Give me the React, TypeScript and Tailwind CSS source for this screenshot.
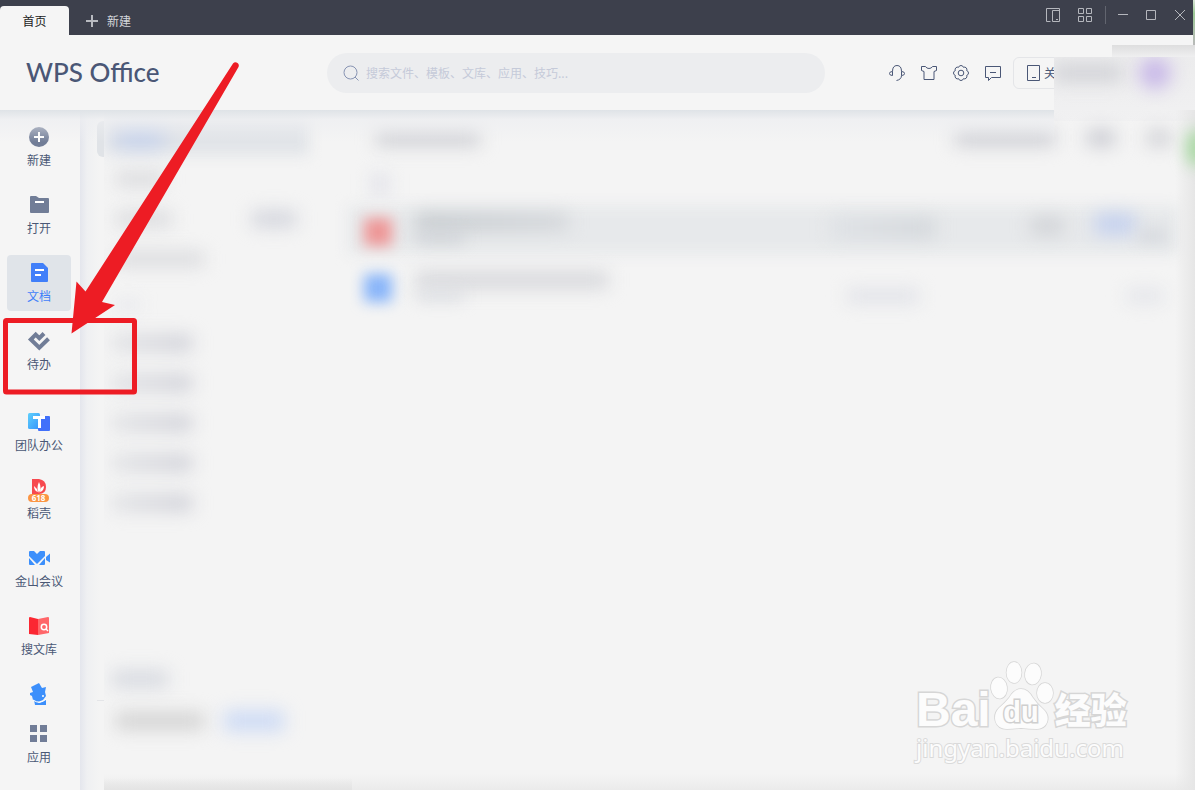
import type { ReactNode } from "react";

type NavItem = { label: string; icon: ReactNode; active?: boolean };

const mainNav: NavItem[] = [
  {
    label: "新建",
    icon: (
      <>
        <circle cx="12" cy="12" r="10" fill="#717d97" />
        <path d="M12 7v10M7 12h10" stroke="#fff" strokeWidth="2" />
      </>
    ),
  },
  {
    label: "打开",
    icon: (
      <>
        <path d="M3 4q0-1 1-1h5l3 2h9q1 0 1 1v13q0 1-1 1H4q-1 0-1-1z" fill="#717d97" />
        <path d="M8 9h9" stroke="#fff" strokeWidth="2" />
      </>
    ),
  },
  {
    label: "文档",
    active: true,
    icon: (
      <>
        <path d="M4 3q0-1 1-1h11l5 5v13q0 1-1 1H5q-1 0-1-1z" fill="#417ff9" />
        <path d="M8 9h9M8 14h6" stroke="#fff" strokeWidth="2" />
      </>
    ),
  },
  {
    label: "待办",
    icon: (
      <path
        d="M17 4.500l-4.700 4.700L8.700 5.600 3.800 10.500l8.500 8.300 9.200-9"
        fill="none"
        stroke="#717d97"
        strokeWidth="4"
      />
    ),
  },
];

const appNav: NavItem[] = [
  {
    label: "团队办公",
    icon: (
      <>
        <defs>
          <linearGradient id="team" x1="0" y1="0" x2="1" y2="1">
            <stop offset="0" stopColor="#5fd0fc" />
            <stop offset="1" stopColor="#3593fb" />
          </linearGradient>
        </defs>
        <rect x="1" y="3" width="12" height="16" rx="1.500" fill="url(#team)" />
        <path d="M11 6h11q1 0 1 1v13q0 1-1 1H12q-1 0-1-1z" fill="#4170fa" />
        <path d="M6 6h12v3h-4v9h-3v-9H6z" fill="#fff" />
      </>
    ),
  },
  {
    label: "稻壳",
    icon: (
      <>
        <path d="M5 1h7q7 1 7 8t-7 7H5z" fill="#f7494f" />
        <path
          d="M12 15q-3-5 0-11 3 6 0 11M11 14q-4-1-4-6 3 2 4 6M13 14q0-5 4-6 0 5-4 6"
          fill="#fff"
        />
        <rect x="1" y="16" width="21" height="8" rx="4" fill="#fb9543" />
        <text
          x="11.500"
          y="23"
          textAnchor="middle"
          className="fill-white font-['Noto_Sans',sans-serif] text-[8px] font-bold"
        >
          618
        </text>
      </>
    ),
  },
  {
    label: "金山会议",
    icon: (
      <>
        <path d="M2 6q0-1 1-1h4l3 3 3-3h4q1 0 1 1v4l-8 8-8-8z" fill="#3c8ffb" />
        <path d="M2 12l6 7H3q-1 0-1-1zM18 12l-6 7h5q1 0 1-1z" fill="#3c8ffb" />
        <path d="M19 11l4-3.500v9L19 14z" fill="#3c8ffb" />
      </>
    ),
  },
  {
    label: "搜文库",
    icon: (
      <>
        <path d="M2 4q0-1 1-1l8 2v16l-9-1z" fill="#fb2732" />
        <path d="M11 5l10-2q1 0 1 1v15l-11 2z" fill="#ff6669" />
        <circle cx="17" cy="13" r="2.700" fill="none" stroke="#fff" strokeWidth="1.500" />
        <path d="M19 15l2 2" stroke="#fff" strokeWidth="1.500" />
      </>
    ),
  },
];

const folderRows = ["w-12", "w-14", "w-22"];
const tagRows = ["w-20", "w-20", "w-20", "w-20", "w-20"];

function NavButton({ item }: { item: NavItem }) {
  return (
    <button
      type="button"
      className={`flex h-14 w-16 shrink-0 flex-col items-center rounded pt-1.5 ${
        item.active ? "bg-[#e0e4e9] text-[#417ff9]" : "text-[#4a5875]"
      }`}
    >
      <svg className="size-6" viewBox="0 0 24 24">
        {item.icon}
      </svg>
      <span className="mt-[3px] text-xs leading-4">{item.label}</span>
    </button>
  );
}

function Stroke({ children }: { children: ReactNode }) {
  return (
    <svg className="size-4" viewBox="0 0 16 16" fill="none" stroke="currentColor">
      {children}
    </svg>
  );
}

function TitleBar() {
  return (
    <div className="flex h-[35px] shrink-0 items-end bg-[#3d404c] text-xs text-[#d4d6da]">
      <button type="button" className="h-[29px] w-[69px] rounded-t bg-[#f5f5f5] text-[#222]">
        首页
      </button>
      <button type="button" className="ml-4 flex h-[29px] items-center gap-2">
        <svg className="size-3.5" viewBox="0 0 14 14" stroke="#b8bac0" strokeWidth="2">
          <path d="M7 1v12M1 7h12" />
        </svg>
        新建
      </button>
      <div className="mr-[7px] ml-auto flex h-[30px] items-center self-start text-[#b5b7bd]">
        <button type="button" aria-label="侧栏">
          <Stroke>
            <path d="M5.500 14.500h-4v-13h13v13h-7v-11h7M11 12.500h2" />
          </Stroke>
        </button>
        <button type="button" aria-label="网格" className="ml-4">
          <Stroke>
            <path d="M1.500 1.500h5v5h-5zM9.500 1.500h5v5h-5zM1.500 9.500h5v5h-5zM9.500 9.500h5v5h-5z" />
          </Stroke>
        </button>
        <span className="ml-3 h-[18px] w-px bg-[#62656f]" />
        <button type="button" aria-label="最小化" className="ml-[9px]">
          <Stroke>
            <path d="M3 7.500h10" />
          </Stroke>
        </button>
        <button type="button" aria-label="最大化" className="ml-3">
          <Stroke>
            <path d="M3.500 3.500h9v9h-9z" />
          </Stroke>
        </button>
        <button type="button" aria-label="关闭" className="ml-[13px]">
          <Stroke>
            <path d="M3 3l10 10M13 3L3 13" />
          </Stroke>
        </button>
      </div>
    </div>
  );
}

function Header() {
  return (
    <header className="relative flex h-[75px] shrink-0 items-center bg-[#f5f5f5] text-[#4a5776]">
      <h1 className="w-[327px] shrink-0 pl-[26px] font-['Lato',sans-serif] text-[26px] font-medium">
        WPS Office
      </h1>
      <label className="flex h-10 min-w-0 flex-1 items-center gap-[7px] rounded-full bg-[#ecedef] pl-4 text-[#8894b3]">
        <Stroke>
          <circle cx="7.500" cy="7.500" r="6.500" />
          <path d="M12 12l3.500 3.500" />
        </Stroke>
        <input
          type="search"
          aria-label="搜索"
          placeholder="搜索文件、模板、文库、应用、技巧..."
          className="min-w-0 flex-1 bg-transparent text-xs outline-none placeholder:text-[#c5cad9]"
        />
      </label>
      <div className="ml-16 flex items-center gap-4">
        <button type="button" aria-label="客服">
          <Stroke>
            <path d="M3.500 6.500v4q-3 0-3-2t3-2zM3.500 6.500q0-6 4.500-6t4.500 6v4q3 0 3-2t-3-2M12.500 10.500q0 4-5 5" />
          </Stroke>
        </button>
        <button type="button" aria-label="皮肤">
          <Stroke>
            <path d="M.5 1.500h4q1 2 3.500 2t3.500-2h4v4l-2.500 1v8H3v-8l-2.500-1z" />
          </Stroke>
        </button>
        <button type="button" aria-label="设置">
          <Stroke>
            <path d="M13.700 5.600a2.500 2.500 0 0 1 0 4.800 2.500 2.500 0 0 1-3.300 3.300 2.500 2.500 0 0 1-4.800 0 2.500 2.500 0 0 1-3.300-3.300 2.500 2.500 0 0 1 0-4.800 2.500 2.500 0 0 1 3.300-3.300 2.500 2.500 0 0 1 4.800 0 2.500 2.500 0 0 1 3.300 3.300z" />
            <circle cx="8" cy="8" r="2.800" />
          </Stroke>
        </button>
        <button type="button" aria-label="反馈">
          <Stroke>
            <path d="M.5 1.500h15v11h-9l-3 3v-3h-3zM5 7.500h6" />
          </Stroke>
        </button>
      </div>
      <button
        type="button"
        className="ml-3 flex h-8 w-[182px] items-center gap-0.5 rounded-md border border-[#e4e5e8] pl-3 text-xs"
      >
        <Stroke>
          <path d="M1.500.5h12v15h-12zM6 12.500h4" />
        </Stroke>
        关
      </button>

      {/* frosted account area over the right end of the header */}
      <div className="absolute top-[22px] right-0 h-16 w-[141px] overflow-hidden bg-linear-to-b from-[#ececed] to-[#f1f1f2]">
        <div className="flex h-8 items-center justify-between">
          <span className="h-4 w-17 bg-[#cfd0d5] blur-[9px]" />
          <span className="mr-6 size-8 rounded-full bg-[#c8b8e8] blur-[9px]" />
        </div>
      </div>
      <div className="absolute top-[10px] right-0 h-3 w-[83px] bg-linear-to-b from-[#dedede] to-[#efeff0]" />
    </header>
  );
}

function FolderPanel() {
  return (
    <div className="flex w-[216px] shrink-0 flex-col">
      <div className="mt-[9px] flex h-9 w-[205px] items-center bg-[#e1e4e8] blur-[7px]">
        <span className="ml-3 h-5 w-12 bg-[#c3d0ec] blur-sm" />
      </div>
      <div className="mt-4 flex flex-col gap-6 pl-3">
        {folderRows.map((width, i) => (
          <div key={i} className="flex h-4 items-center justify-between pr-6">
            <span className={`h-3.5 ${width} bg-[#d8d9dc] blur-[9px]`} />
            {i === 1 && <span className="h-4 w-11 bg-[#d2d4dc] blur-[9px]" />}
          </div>
        ))}
      </div>
      <div className="mt-8 ml-3 h-3 w-6 bg-[#e8e9ed] blur-[8px]" />
      <div className="mt-6 flex flex-col gap-6 pl-2">
        {tagRows.map((width, i) => (
          <span key={i} className={`h-4 ${width} bg-linear-to-r from-[#e1e2e5] to-[#cdced6] blur-[9px]`} />
        ))}
      </div>
      <span className="mt-auto ml-2 h-4 w-14 bg-[#d5d8df] blur-[9px]" />
      <div className="mt-6 mb-[59px] ml-3 flex items-center gap-5">
        <span className="h-4 w-22 bg-[#d0d0d0] blur-[9px]" />
        <span className="h-5 w-15 bg-[#ccdaf5] blur-[9px]" />
      </div>
    </div>
  );
}

function DocumentList() {
  return (
    <div className="flex min-w-0 flex-1 flex-col pr-4 pl-7">
      <div className="mt-5 flex h-4 items-center">
        <span className="ml-7 h-4 w-26 bg-[#cfd0d5] blur-[9px]" />
        <span className="ml-auto h-4 w-25 bg-[#cdced4] blur-[9px]" />
        <span className="ml-8 h-4 w-7 bg-[#c8c9d0] blur-[9px]" />
        <span className="mr-2 ml-8 h-4 w-6 bg-[#cfd0d5] blur-[9px]" />
      </div>
      <span className="mt-7 ml-6 h-5 w-4 bg-[#dfe0e8] blur-[9px]" />
      <div className="relative mt-3 flex h-12 items-start">
        <div className="absolute inset-0 bg-[#e7e9eb] blur-[7px]" />
        <span className="relative mt-3 ml-4 size-7 bg-[#ee9696] blur-[7px]" />
        <div className="relative mt-2 ml-6 flex flex-col gap-1">
          <span className="h-4 w-38 bg-linear-to-r from-[#c3c8cc] to-[#d2d5d9] blur-[9px]" />
          <span className="h-2 w-12 bg-[#c8ccd2] blur-[8px]" />
        </div>
        <span className="relative mt-3 ml-auto h-5 w-26 bg-linear-to-r from-[#dee1e5] to-[#d2d6da] blur-[9px]" />
        <span className="relative mt-3 ml-24 h-4 w-8 bg-[#cfd1d5] blur-[9px]" />
        <span className="relative mt-2 ml-8 h-5 w-10 bg-[#c3d0ef] blur-[9px]" />
        <span className="relative mt-6 mr-3 ml-1 h-3 w-7 bg-[#d3d6dc] blur-[8px]" />
      </div>
      <div className="mt-2.5 flex h-12 items-center">
        <span className="ml-4 size-7 bg-[#87b4f9] blur-[7px]" />
        <div className="ml-6 flex h-full flex-col gap-1 pt-2">
          <span className="h-4 w-48 bg-[#d5d6da] blur-[9px]" />
          <span className="h-2 w-12 bg-[#d5d8de] blur-[8px]" />
        </div>
        <span className="mt-4 ml-auto h-3 w-18 bg-[#dddfe6] blur-[9px]" />
        <span className="mt-4 mr-4 ml-52 h-3 w-9 bg-[#e0e2e8] blur-[9px]" />
      </div>
    </div>
  );
}

function Watermark() {
  return (
    <div className="absolute top-[660px] right-[66px] flex w-[213px] flex-col whitespace-nowrap text-[#fcfcfc] [-webkit-text-stroke:3px_#d6d6d6] [paint-order:stroke_fill]">
      <div className="flex items-end">
        <span className="font-['Liberation_Sans',sans-serif] text-[48px] leading-[40px] font-bold">
          Bai
        </span>
        <svg className="h-[70px] w-[64px] shrink-0 overflow-visible" viewBox="0 0 64 70">
          <g fill="#fcfcfc" stroke="#d6d6d6" strokeWidth="1.500">
            <ellipse cx="8" cy="28" rx="8" ry="10.500" transform="rotate(-8 8 28)" />
            <ellipse cx="23" cy="12.500" rx="7.500" ry="10.500" />
            <ellipse cx="42" cy="14" rx="8" ry="10.500" transform="rotate(8 42 14)" />
            <ellipse cx="54" cy="33" rx="8" ry="10" />
            <path d="M30 29q7 0 12 9 4 6 10 11c9 8 4 20-6 20q-8 0-16-1-8 1-14 1C3 69 1 55 8 48q6-5 10-10 5-9 12-9z" />
          </g>
          <text
            x="30"
            y="62"
            textAnchor="middle"
            className="font-['Liberation_Sans',sans-serif] text-[29px] font-bold"
            fill="#fcfcfc"
            stroke="#cfcfcf"
            strokeWidth="3"
          >
            du
          </text>
        </svg>
        <span className="pb-1 font-['Noto_Sans_CJK_SC',sans-serif] text-4xl leading-[36px] font-black">
          经验
        </span>
      </div>
      <span className="mt-1.5 font-['Noto_Sans',sans-serif] text-[24px] leading-6 [-webkit-text-stroke:2px_#dadada]">
        jingyan.baidu.com
      </span>
    </div>
  );
}

function Callout() {
  return (
    <svg
      className="pointer-events-none absolute top-0 left-0 h-[400px] w-[250px]"
      viewBox="0 0 250 400"
    >
      <rect x="5.500" y="320.500" width="129" height="71.500" rx="1" fill="none" stroke="#ed1c24" strokeWidth="5" />
      <path
        d="M71.500 333.500L76.500 281.500 85.500 291.500 233 63.500Q235 61.500 237.500 63 239.500 64.500 238.500 67L102 302 115 305z"
        fill="#ed1c24"
      />
    </svg>
  );
}

export default function App() {
  return (
    <div className="relative flex min-h-screen flex-col overflow-hidden bg-[#f4f4f4] font-['Noto_Sans_CJK_SC',sans-serif]">
      <TitleBar />
      <Header />
      <main className="relative flex flex-1">
        <nav className="flex w-20 shrink-0 flex-col bg-[#f5f5f5] pt-[9px] pb-4 pl-[7px]">
          <div className="flex flex-col gap-3">
            {mainNav.map((item) => (
              <NavButton key={item.label} item={item} />
            ))}
          </div>
          <div className="mt-[25px] flex flex-col gap-3">
            {appNav.map((item) => (
              <NavButton key={item.label} item={item} />
            ))}
            <button type="button" aria-label="助手" className="flex h-7 w-16 justify-center pt-1.5">
              <svg className="size-6" viewBox="0 0 24 24" fill="#3c8ffb">
                <path d="M4 5l8-4 3 5 4-1-1 5 1 4-3 4-5 2-5-2-1-4-2-1v-2l3-1z" />
                <path d="M7 18l5 3 7-3v5H8z" />
                <path d="M6 18q7 5 13-1" fill="none" stroke="#fff" />
                <circle cx="16" cy="14" r="1" fill="#fff" />
              </svg>
            </button>
            <NavButton
              item={{
                label: "应用",
                icon: <path d="M3 3h7v7H3zM13 3h7v7h-7zM3 13h7v7H3zM13 13h7v7h-7z" fill="#717d97" />,
              }}
            />
          </div>
        </nav>
        <div className="flex w-6 shrink-0 flex-col items-end bg-linear-to-r from-[#e4e6ed] via-[#eff0f2] via-30% to-[#f4f4f4] to-80%">
          <span className="mt-[11px] h-9 w-[7px] rounded-l-md bg-[#e0e3e7]" />
          <span className="mt-auto mb-[89px] h-px w-[7px] bg-[#e4e5e8]" />
        </div>
        <div className="relative flex min-w-0 flex-1 overflow-hidden">
          <FolderPanel />
          <DocumentList />
          <div className="absolute inset-x-0 bottom-0 h-4 bg-linear-to-t from-[#ebebeb] to-transparent" />
          <div className="absolute bottom-0 left-0 h-3 w-62 bg-linear-to-t from-[#e4e4e4] to-transparent" />
          <div className="absolute inset-y-0 right-0 w-5 bg-linear-to-l from-[#e6e6e6] to-transparent" />
          <div className="absolute top-5 -right-3 h-9 w-5 rounded-full bg-[#a5d89f] blur-[8px]" />
        </div>
        <div className="pointer-events-none absolute top-0 left-0 h-8 w-[1054px] bg-linear-to-b from-[#dfe3e7] via-[#edeef1]/70 via-30% to-transparent" />
      </main>
      <div className="absolute top-0 right-0 h-[45px] w-0.5 bg-linear-to-b from-[#d8e5d6] via-[#9cc996] via-30% to-[#b9b9b9]" />
      <Watermark />
      <Callout />
    </div>
  );
}
